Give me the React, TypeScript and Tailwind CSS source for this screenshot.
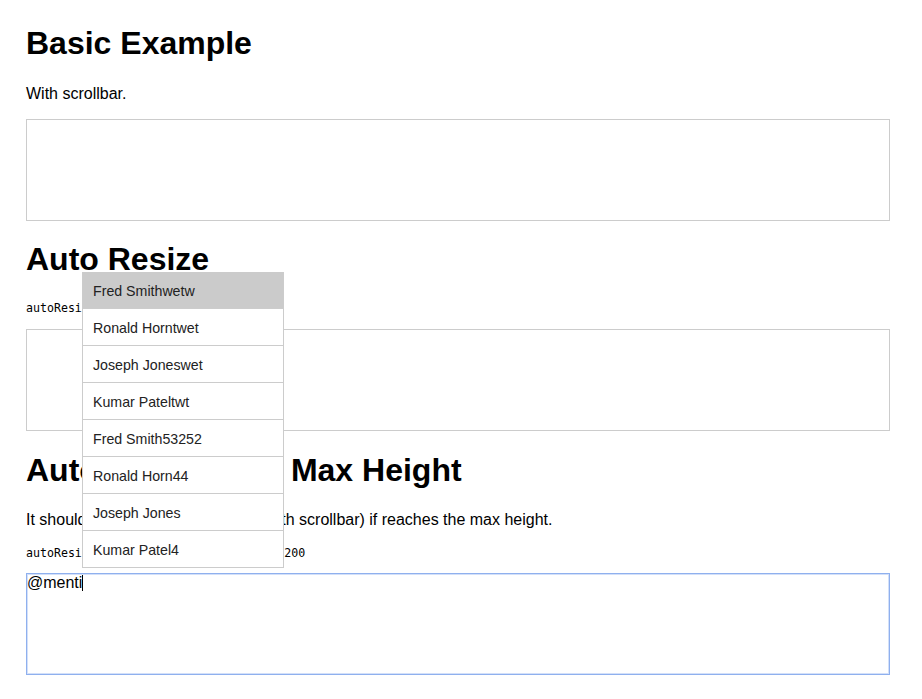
import React from "react";

const items = [
  "Fred Smithwetw",
  "Ronald Horntwet",
  "Joseph Joneswet",
  "Kumar Pateltwt",
  "Fred Smith53252",
  "Ronald Horn44",
  "Joseph Jones",
  "Kumar Patel4",
];

export default function App() {
  return (
    <div
      className="relative min-h-[699px] bg-white px-[26px] pt-[25px] text-black"
      style={{ fontFamily: '"Liberation Sans", Arial, sans-serif' }}
    >
      <h1 className="text-[32px] font-bold leading-[37px]">Basic Example</h1>
      <p className="mt-[23px] text-[16px] leading-[18px]">With scrollbar.</p>
      <div className="mt-[16px] h-[102px] w-[864px] border border-[#cccccc]" />

      <h1 className="mt-[20px] text-[32px] font-bold leading-[37px]">Auto Resize</h1>
      <div
        className="mt-[23px] whitespace-pre text-[11.6px] leading-[14px]"
        style={{ fontFamily: '"DejaVu Sans Mono", monospace' }}
      >
        autoResize={"{true}"}
      </div>
      <div className="mt-[14px] h-[102px] w-[864px] border border-[#cccccc]" />

      <h1 className="mt-[21px] text-[32px] font-bold leading-[37px]">
        Auto Resize with Max Height
      </h1>
      <p className="mt-[22px] text-[16px] leading-[18px]">
        It should grow in height and stop (with scrollbar) if reaches the max height.
      </p>
      <div
        className="mt-[17px] whitespace-pre text-[11.6px] leading-[14px]"
        style={{ fontFamily: '"DejaVu Sans Mono", monospace' }}
      >
        autoResize={"{true}"}, style.maxHeight = 200
      </div>
      <div className="mt-[13px] h-[102px] w-[864px] border border-[#8fb0ee] pt-[2px] shadow-[inset_0_0_0_1px_#d3e0f9]">
        <div className="flex items-start">
          <span className="text-[16px] leading-[14px]">@menti</span>
          <span className="-mt-[1px] h-[16px] w-px bg-black" />
        </div>
      </div>

      <ul className="absolute left-[82px] top-[272px] w-[202px] border-x border-[#cccccc] bg-white">
        {items.map((it, i) => (
          <li
            key={it}
            className={
              i === 0
                ? "h-[37px] border-b border-[#cccccc] bg-[#cbcbcb] pl-[10px] pt-[11px] text-[14.2px] leading-[16px] text-[#222222]"
                : "h-[37px] border-b border-[#cccccc] bg-white pl-[10px] pt-[11px] text-[14.2px] leading-[16px] text-[#222222]"
            }
          >
            {it}
          </li>
        ))}
      </ul>
    </div>
  );
}
